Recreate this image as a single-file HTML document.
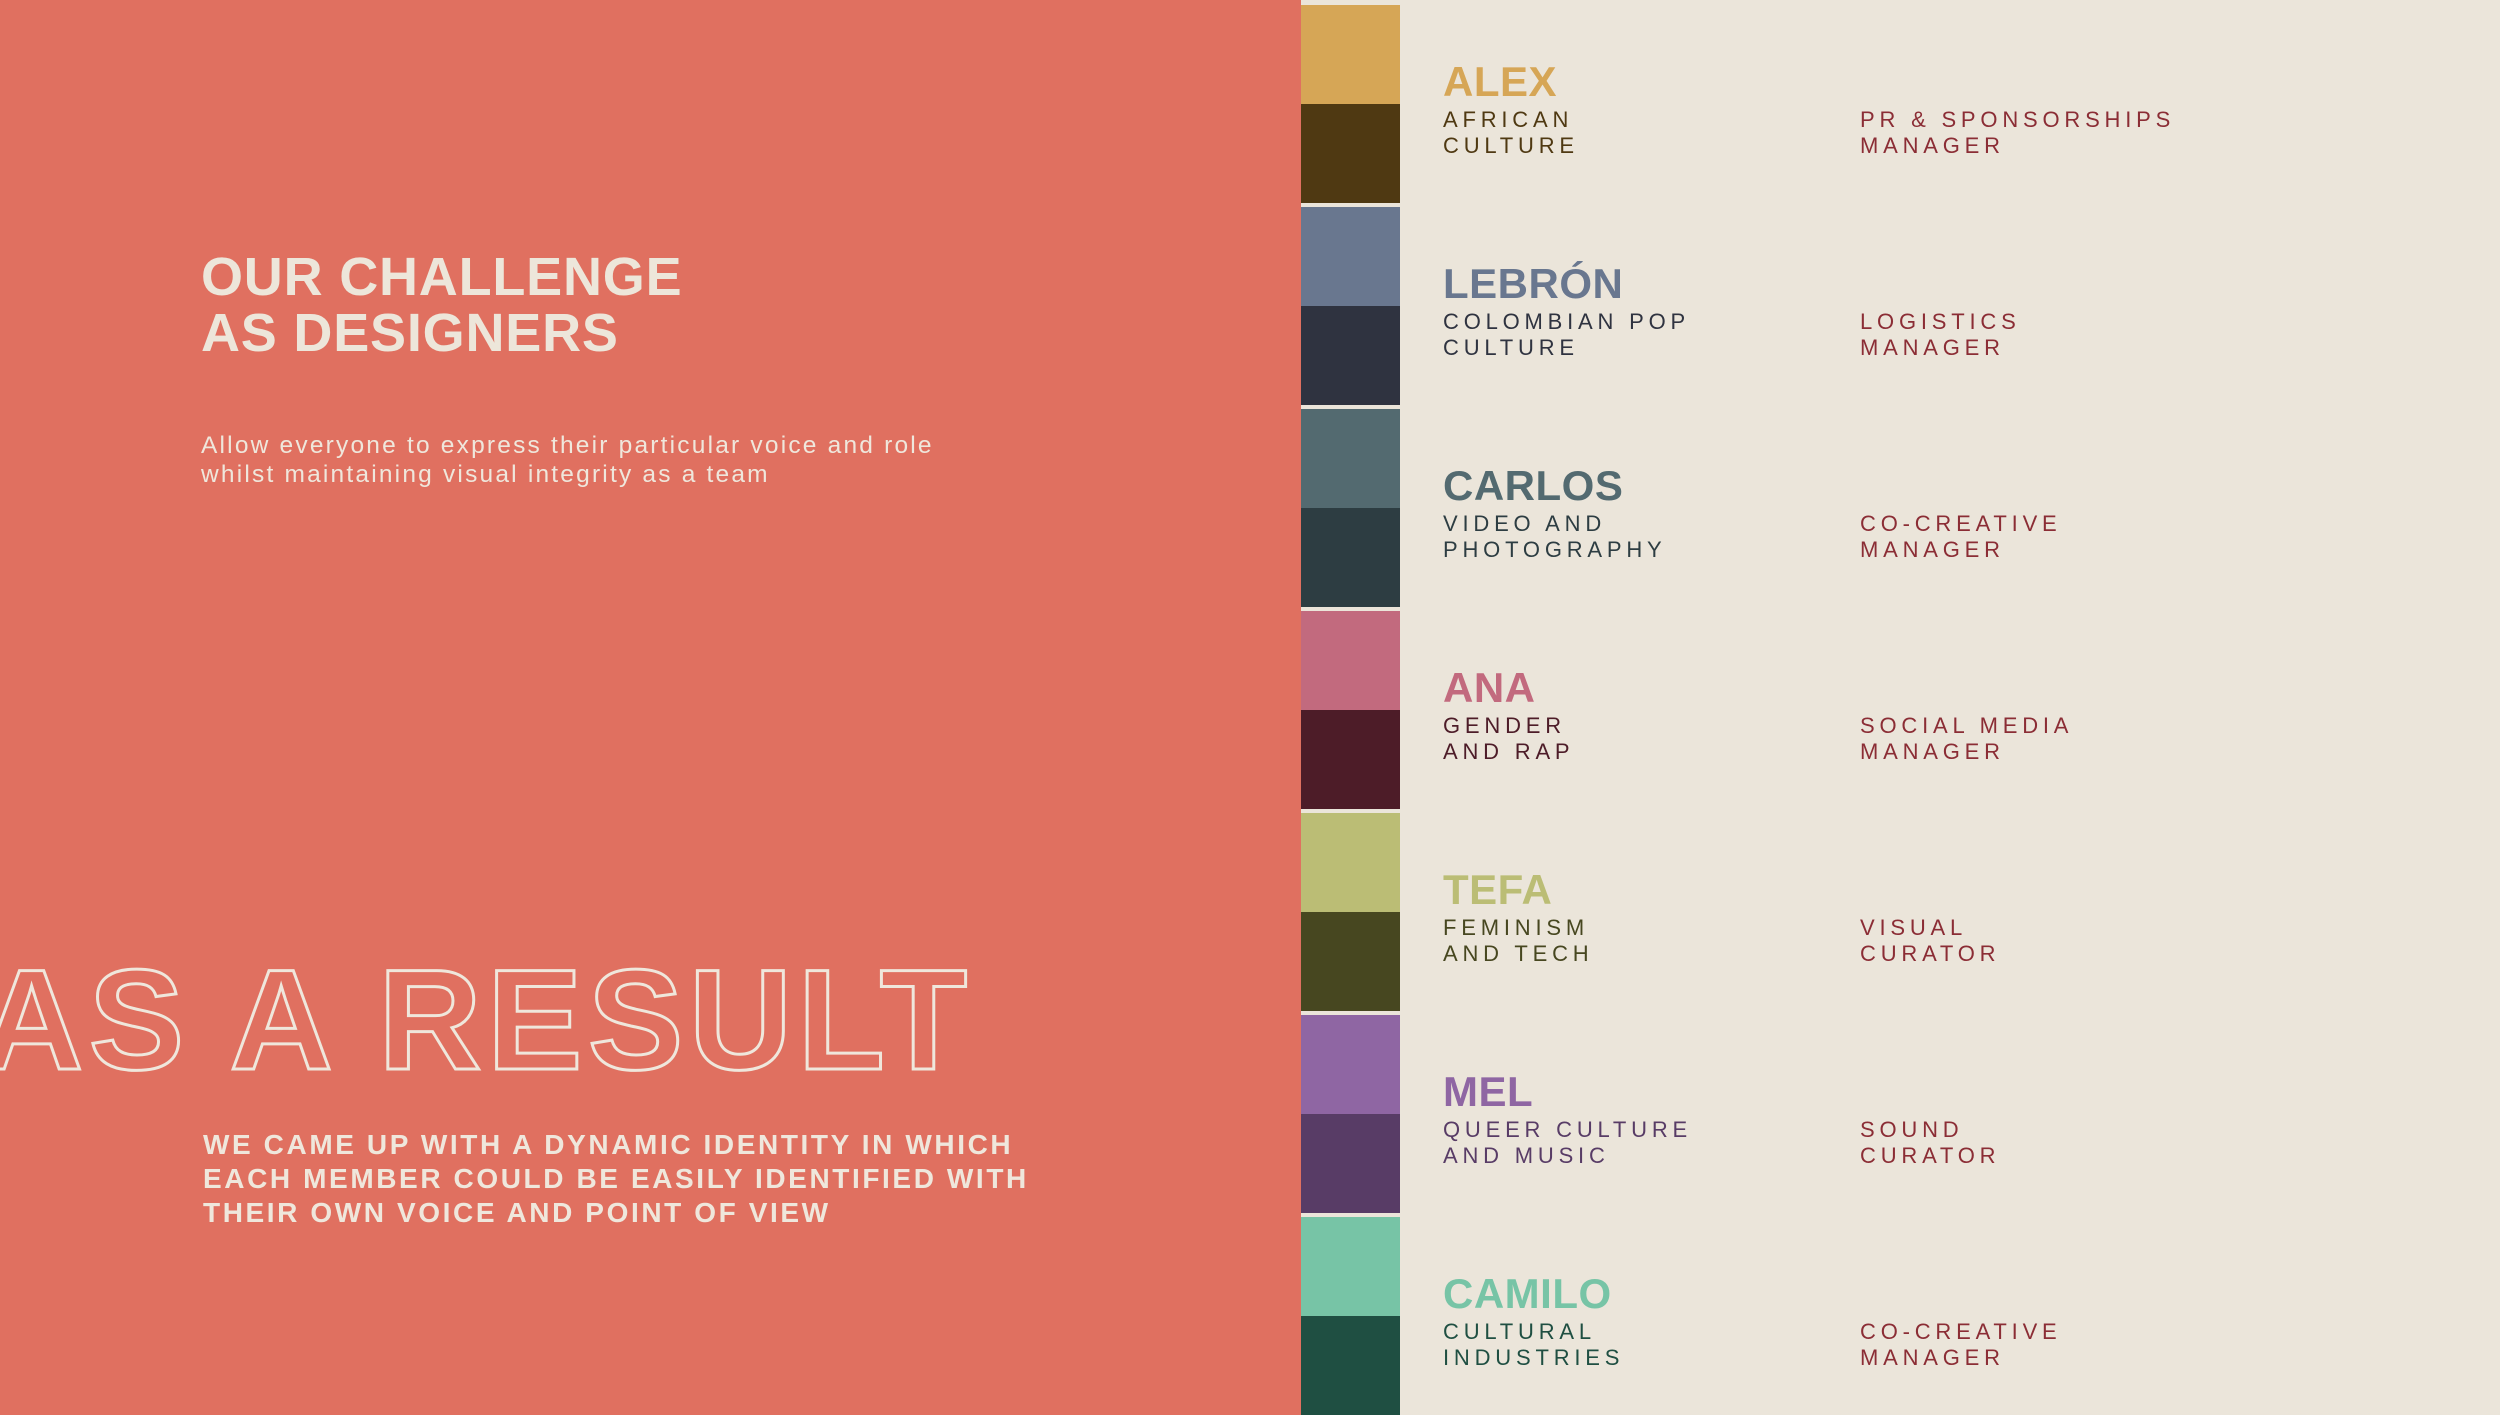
<!DOCTYPE html>
<html><head><meta charset="utf-8"><style>
*{margin:0;padding:0;box-sizing:border-box}
html,body{width:2500px;height:1415px;overflow:hidden;background:#ebe5da;font-family:"Liberation Sans",sans-serif}
.left{position:absolute;left:0;top:0;width:1301px;height:1415px;background:#e07060;overflow:hidden}
.abs{position:absolute;white-space:nowrap}
.title{left:201px;top:249px;font-size:54px;line-height:56px;font-weight:bold;color:#ede6da;letter-spacing:0.8px}
.para{left:201px;top:431px;font-size:24.5px;line-height:29px;color:#efe7dc;letter-spacing:2.2px}
.res{left:-20px;top:949px;font-size:143px;line-height:143px;font-weight:bold;color:transparent;-webkit-text-stroke:3px #efe7dc;letter-spacing:5.5px}
.bot{left:203px;top:1128px;font-size:28px;line-height:34px;font-weight:bold;color:#efe7dc;letter-spacing:2.6px}
.row{position:absolute;left:1301px;width:1199px;height:198px}
.sw1,.sw2{position:absolute;left:0;width:99px}
.sw1{top:0;height:99px}.sw2{top:99px;height:99px}
.name{position:absolute;left:142px;top:56px;font-size:42px;line-height:42px;font-weight:bold;letter-spacing:0.5px}
.sub,.role{position:absolute;top:102px;font-size:22px;line-height:25.5px;letter-spacing:4.8px;white-space:nowrap}
.sub{left:142px}.role{left:559px;color:#8b2d35}
</style></head><body>
<div class="left">
<div class="abs title">OUR CHALLENGE<br>AS DESIGNERS</div>
<div class="abs para">Allow everyone to express their particular voice and role<br>whilst maintaining visual integrity as a team</div>
<div class="abs res">AS A RESULT</div>
<div class="abs bot">WE CAME UP WITH A DYNAMIC IDENTITY IN WHICH<br>EACH MEMBER COULD BE EASILY IDENTIFIED WITH<br>THEIR OWN VOICE AND POINT OF VIEW</div>
</div>

<div class="row" style="top:5px"><div class="sw1" style="background:#d6a656"></div><div class="sw2" style="background:#4f3912"></div>
<div class="name" style="color:#d6a656">ALEX</div><div class="sub" style="color:#4f3912">AFRICAN<br>CULTURE</div><div class="role">PR &amp; SPONSORSHIPS<br>MANAGER</div></div>

<div class="row" style="top:207px"><div class="sw1" style="background:#69778f"></div><div class="sw2" style="background:#2f3340"></div>
<div class="name" style="color:#69778f">LEBRÓN</div><div class="sub" style="color:#2f3340">COLOMBIAN POP<br>CULTURE</div><div class="role">LOGISTICS<br>MANAGER</div></div>

<div class="row" style="top:409px"><div class="sw1" style="background:#536a70"></div><div class="sw2" style="background:#2d3d42"></div>
<div class="name" style="color:#536a70">CARLOS</div><div class="sub" style="color:#2d3d42">VIDEO AND<br>PHOTOGRAPHY</div><div class="role">CO-CREATIVE<br>MANAGER</div></div>

<div class="row" style="top:611px"><div class="sw1" style="background:#c26a7e"></div><div class="sw2" style="background:#4d1c28"></div>
<div class="name" style="color:#c26a7e">ANA</div><div class="sub" style="color:#4d1c28">GENDER<br>AND RAP</div><div class="role">SOCIAL MEDIA<br>MANAGER</div></div>

<div class="row" style="top:813px"><div class="sw1" style="background:#bbbd75"></div><div class="sw2" style="background:#474720"></div>
<div class="name" style="color:#bbbd75">TEFA</div><div class="sub" style="color:#474720">FEMINISM<br>AND TECH</div><div class="role">VISUAL<br>CURATOR</div></div>

<div class="row" style="top:1015px"><div class="sw1" style="background:#8f66a3"></div><div class="sw2" style="background:#583c66"></div>
<div class="name" style="color:#8f66a3">MEL</div><div class="sub" style="color:#583c66">QUEER CULTURE<br>AND MUSIC</div><div class="role">SOUND<br>CURATOR</div></div>

<div class="row" style="top:1217px"><div class="sw1" style="background:#77c4a6"></div><div class="sw2" style="background:#1f4f42"></div>
<div class="name" style="color:#77c4a6">CAMILO</div><div class="sub" style="color:#1f4f42">CULTURAL<br>INDUSTRIES</div><div class="role">CO-CREATIVE<br>MANAGER</div></div>
</body></html>
